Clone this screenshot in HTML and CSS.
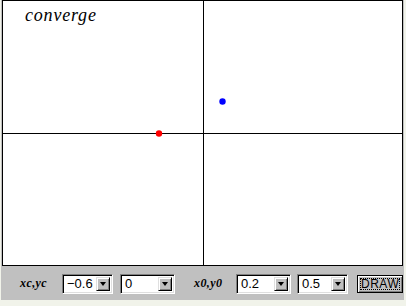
FILE: index.html
```html
<!DOCTYPE html>
<html>
<head>
<meta charset="utf-8">
<link rel="stylesheet" href="styles.css">
</head>
<body>
<div class="app">
  <div class="plot">
    <svg width="399" height="264" viewBox="0 0 399 264">
      <line x1="200.5" y1="0" x2="200.5" y2="264" stroke="#000" stroke-width="1"/>
      <line x1="0" y1="132.5" x2="399" y2="132.5" stroke="#000" stroke-width="1"/>
      <circle cx="156" cy="132.5" r="3.2" fill="#ff0000"/>
      <circle cx="219.5" cy="100.5" r="3.2" fill="#0000ff"/>
    </svg>
    <span class="title">converge</span>
  </div>
  <div class="toolbar">
    <span class="lbl lbl-c">xc,yc</span>
    <div class="combo w51"><span class="val">&minus;0.6</span><span class="btn"><i class="arr"></i></span></div>
    <div class="combo w55 gap8"><span class="val">0</span><span class="btn"><i class="arr"></i></span></div>
    <span class="lbl lbl-0">x0,y0</span>
    <div class="combo w55"><span class="val">0.2</span><span class="btn"><i class="arr"></i></span></div>
    <div class="combo w51 gap6"><span class="val">0.5</span><span class="btn"><i class="arr"></i></span></div>
    <div class="draw"><span class="focus">DRAW</span></div>
  </div>
</div>
</body>
</html>
```
FILE: styles.css
```css
html, body {
  margin: 0;
  padding: 0;
  background: #f1f3ea;
  width: 406px;
  height: 306px;
  overflow: hidden;
}
.app {
  margin-left: 1px;
  width: 403px;
  height: 300px;
  background: #c0c0c0;
}
.plot {
  position: relative;
  margin-left: 1px;
  width: 399px;
  height: 264px;
  border: 1px solid #000;
  background: #fff;
}
.plot svg {
  display: block;
}
.title {
  position: absolute;
  left: 22px;
  top: 4px;
  font-family: "Liberation Serif", serif;
  font-style: italic;
  font-size: 18px;
  letter-spacing: 0.8px;
  color: #000;
  line-height: 20px;
}
.toolbar {
  display: flex;
  align-items: center;
  height: 35px;
  font-family: "Liberation Sans", Arial, sans-serif;
  font-size: 12px;
}
.lbl {
  font-family: "Liberation Serif", serif;
  font-style: italic;
  font-weight: bold;
  font-size: 12px;
  letter-spacing: 0.4px;
  width: 28px;
}
.lbl-c { margin-left: 19px; margin-right: 14px; }
.lbl-0 { margin-left: 19px; margin-right: 14px; }
.combo {
  box-sizing: border-box;
  display: flex;
  align-items: center;
  height: 20px;
  border-top: 1px solid #808080;
  border-left: 1px solid #808080;
  border-right: 1px solid #fff;
  border-bottom: 1px solid #fff;
  box-shadow: inset 1px 1px 0 #000, inset -1px -1px 0 #dfdfdf;
  background: #fff;
  padding: 2px;
}
.w51 { width: 51px; }
.w55 { width: 55px; }
.gap8 { margin-left: 7px; }
.gap6 { margin-left: 6px; }
.val {
  flex: 1;
  padding-left: 2px;
  font-size: 13px;
  line-height: 15px;
  color: #000;
}
.btn {
  box-sizing: border-box;
  width: 14px;
  height: 14px;
  background: #c0c0c0;
  border-top: 1px solid #dfdfdf;
  border-left: 1px solid #dfdfdf;
  border-right: 1px solid #000;
  border-bottom: 1px solid #000;
  box-shadow: inset 1px 1px 0 #fff, inset -1px -1px 0 #808080;
  display: flex;
  align-items: center;
  justify-content: center;
}
.arr {
  width: 0;
  height: 0;
  border-left: 3.5px solid transparent;
  border-right: 3.5px solid transparent;
  border-top: 4px solid #000;
  margin-top: 1px;
}
.draw {
  box-sizing: border-box;
  margin-left: 9px;
  width: 46px;
  height: 18px;
  border: 1px solid #000;
  background: #c0c0c0;
  box-shadow: inset 1px 1px 0 #fff, inset -1px -1px 0 #808080;
  display: flex;
  align-items: center;
  justify-content: center;
}
.focus {
  box-sizing: border-box;
  width: 40px;
  height: 12px;
  border: 1px dotted #000;
  font-size: 12px;
  line-height: 10px;
  text-align: center;
  color: #000;
  letter-spacing: 0.5px;
}
```
